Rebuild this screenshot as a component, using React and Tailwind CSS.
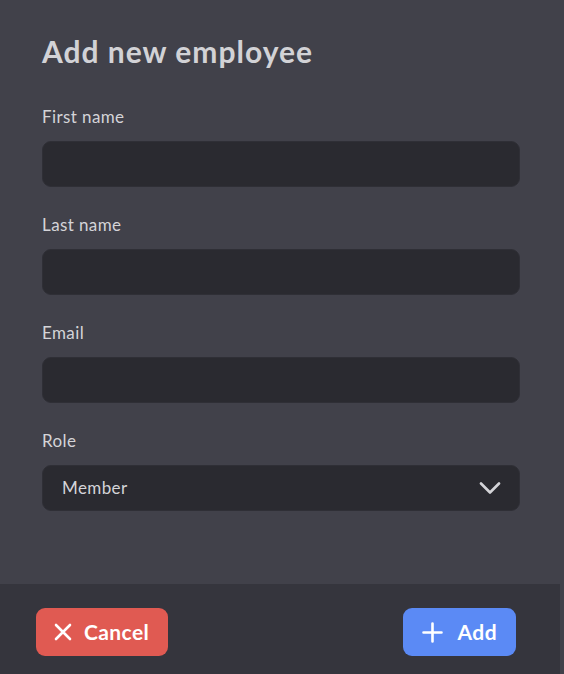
import React, { useState } from 'react';

const font = { fontFamily: 'Lato, "Noto Sans", sans-serif' };

function Field({ label, children }) {
    return (
        <div className="flex flex-col">
            <label className="text-[17px] leading-[22px] tracking-[0.4px] text-[#d4d4d8] mb-[13px]">{label}</label>
            {children}
        </div>
    );
}

export default function App() {
    const [form, setForm] = useState({ first: '', last: '', email: '', role: 'Member' });
    const set = (k) => (e) => setForm({ ...form, [k]: e.target.value });

    const inputCls =
        'h-[46px] w-full rounded-[9px] bg-[#2a2a30] border border-[#2f2f36] px-[19px] text-[17px] tracking-[0.4px] text-[#d4d4d8] outline-none';

    return (
        <div className="w-[564px] h-[674px] bg-[#41414a] flex" style={font}>
            <div className="w-[560px] h-full flex flex-col">
                <div className="flex-1 px-[42px] pt-[33px]">
                    <h1 className="text-[30px] leading-[36px] font-bold text-[#d2d2d6] tracking-[1px] mb-[37px]">
                        Add new employee
                    </h1>
                    <div className="flex flex-col gap-[27px] w-[478px]">
                        <Field label="First name">
                            <input className={inputCls} value={form.first} onChange={set('first')} />
                        </Field>
                        <Field label="Last name">
                            <input className={inputCls} value={form.last} onChange={set('last')} />
                        </Field>
                        <Field label="Email">
                            <input className={inputCls} value={form.email} onChange={set('email')} />
                        </Field>
                        <Field label="Role">
                            <div className="relative">
                                <select
                                    className={inputCls + ' appearance-none'}
                                    value={form.role}
                                    onChange={set('role')}
                                >
                                    <option>Member</option>
                                    <option>Admin</option>
                                </select>
                                <svg
                                    className="absolute right-[19px] top-[17px] w-[22px] h-[12px] pointer-events-none"
                                    viewBox="0 0 22 12"
                                    fill="none"
                                    stroke="#d4d4d8"
                                    strokeWidth="2.6"
                                    strokeLinecap="round"
                                    strokeLinejoin="round"
                                >
                                    <path d="M2 1.5l9 9 9-9" />
                                </svg>
                            </div>
                        </Field>
                    </div>
                </div>

                <div className="h-[90px] bg-[#35353d] flex items-start justify-between pt-[24px] pl-[36px] pr-[44px]">
                    <button className="h-[48px] pl-[18px] pr-[19px] rounded-[9px] bg-[#e05a52] text-white text-[21px] tracking-[0.4px] font-bold flex items-center gap-[12px]">
                        <svg className="w-[18px] h-[18px]" viewBox="0 0 18 18" stroke="white" strokeWidth="2.6" strokeLinecap="round">
                            <path d="M2 2l14 14M16 2L2 16" />
                        </svg>
                        Cancel
                    </button>
                    <button className="h-[48px] pl-[19px] pr-[19px] rounded-[9px] bg-[#5b8af5] text-white text-[21px] tracking-[0.4px] font-bold flex items-center gap-[15px]">
                        <svg className="w-[21px] h-[21px]" viewBox="0 0 21 21" stroke="white" strokeWidth="2.6" strokeLinecap="round">
                            <path d="M10.5 1.5v18M1.5 10.5h18" />
                        </svg>
                        Add
                    </button>
                </div>
            </div>
        </div>
    );
}
